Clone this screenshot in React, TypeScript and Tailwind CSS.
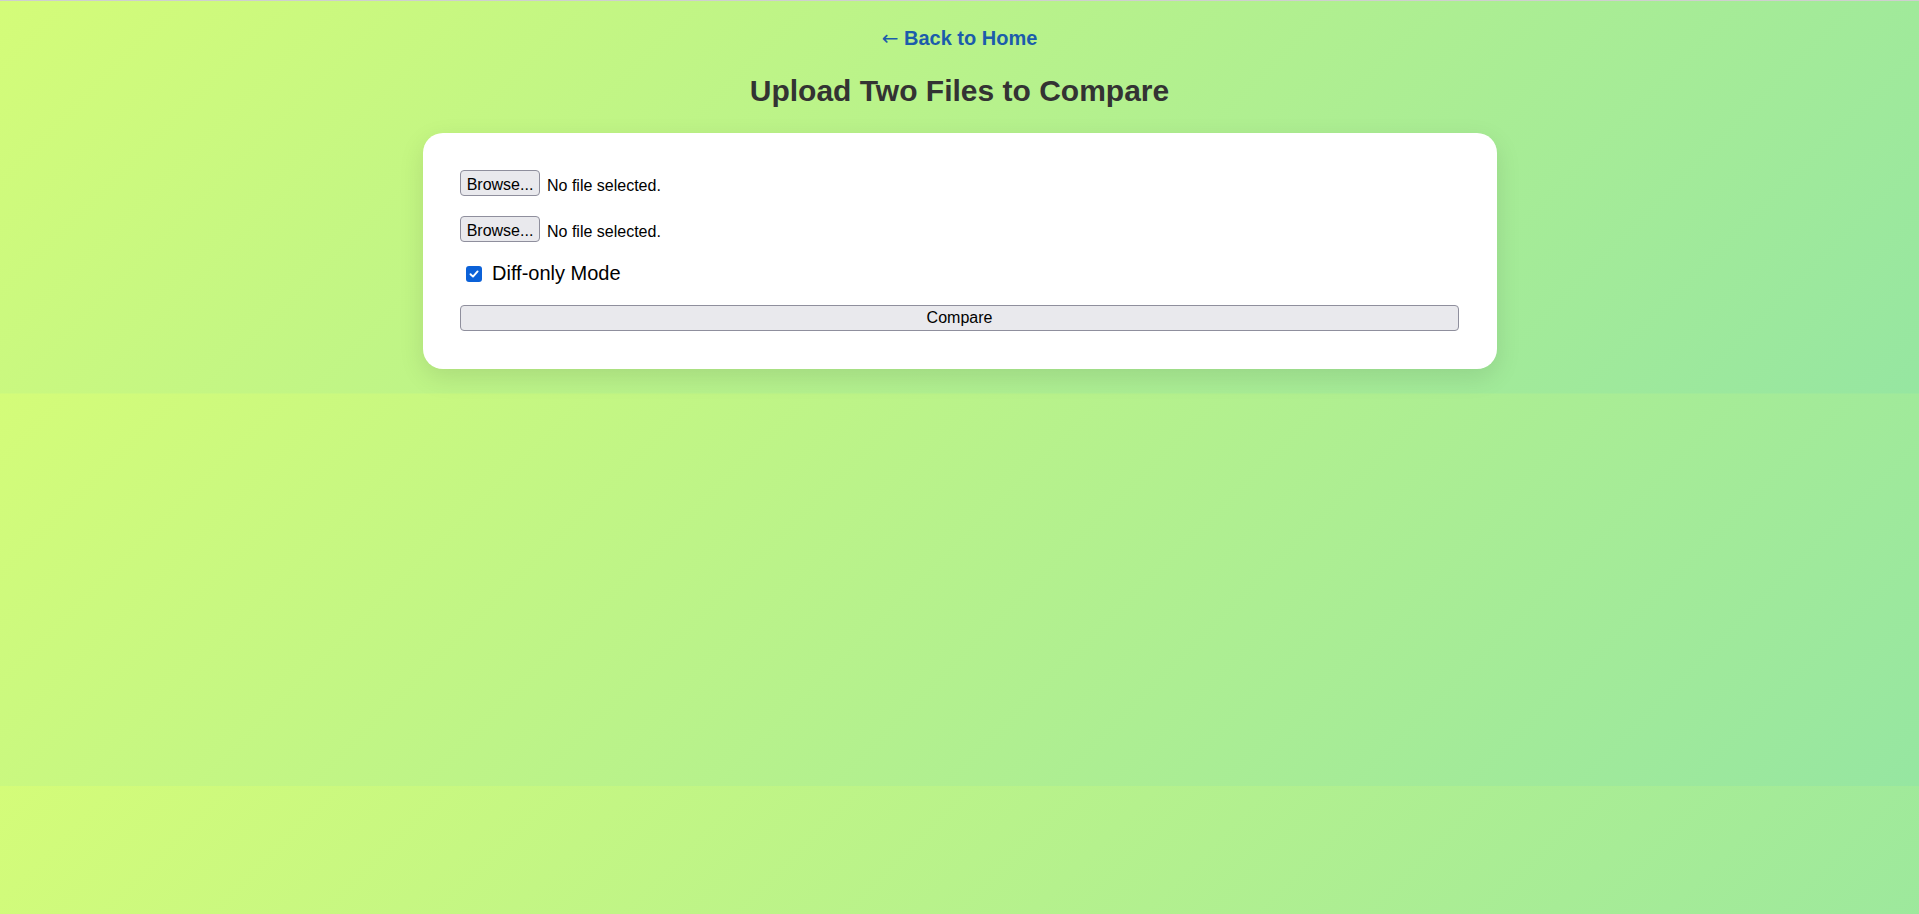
import { useState } from 'react';

// fake Firefox-style file picker, chromium's native one says "Choose File"
function FilePicker() {
  return (
    <div className="flex items-center h-[26px]">
      <button
        type="button"
        className="h-[26px] w-[80px] rounded-[4px] border border-[#8f8f9d] bg-[#e9e9ed] pt-[4px] text-[16px] leading-none text-black"
      >
        Browse...
      </button>
      <span className="ml-[7px] mt-[4px] text-[16px] leading-[19px] text-black">
        No file selected.
      </span>
    </div>
  );
}

export default function App() {
  const [diffOnly, setDiffOnly] = useState(true);

  return (
    <div className="min-h-screen border-t border-[#cfcfcf] bg-[linear-gradient(135deg,#d4fc79,#96e6a1)] bg-[length:100%_392.5px] bg-repeat font-['Liberation_Sans',Arial,sans-serif]">
      <div className="flex flex-col items-center pt-[25.5px]">
        {/* ================= HEADER ================= */}
        <a
          href="#"
          className="h-[23px] text-[20px] leading-[23px] font-bold text-[#1b5cab] no-underline"
        >
          <span className="font-['DejaVu_Sans',sans-serif] font-normal">←</span> Back to Home
        </a>

        <h2 className="mt-[24.5px] h-[34.5px] text-[30px] leading-[34.5px] font-bold text-[#333]">
          Upload Two Files to Compare
        </h2>

        {/* ================= CARD ================= */}
        <div className="mt-[24px] w-[1074px] rounded-[20px] bg-white p-[37.5px] shadow-[0_8px_26px_rgba(0,0,0,0.10)]">
          <div className="flex flex-col gap-[20px]">
            <FilePicker />
            <FilePicker />

            <label className="flex h-[23px] cursor-pointer items-center">
              <span
                onClick={() => setDiffOnly(!diffOnly)}
                className={`ml-[6px] flex h-[16px] w-[16px] items-center justify-center rounded-[3px] ${
                  diffOnly ? 'bg-[#0b61d8]' : 'border border-[#8f8f9d] bg-white'
                }`}
              >
                {diffOnly && (
                  <svg width="12" height="12" viewBox="0 0 12 12" fill="none">
                    <path
                      d="M2.5 6.2 L5 8.6 L9.6 3.4"
                      stroke="white"
                      strokeWidth="1.9"
                      strokeLinecap="round"
                      strokeLinejoin="round"
                    />
                  </svg>
                )}
              </span>
              <span className="ml-[10px] text-[20px] leading-[23px] text-black">
                Diff-only Mode
              </span>
            </label>

            <button
              type="button"
              className="h-[26px] w-full rounded-[4px] border border-[#8f8f9d] bg-[#e9e9ed] text-[16px] leading-none text-black"
            >
              Compare
            </button>
          </div>
        </div>
      </div>
    </div>
  );
}
